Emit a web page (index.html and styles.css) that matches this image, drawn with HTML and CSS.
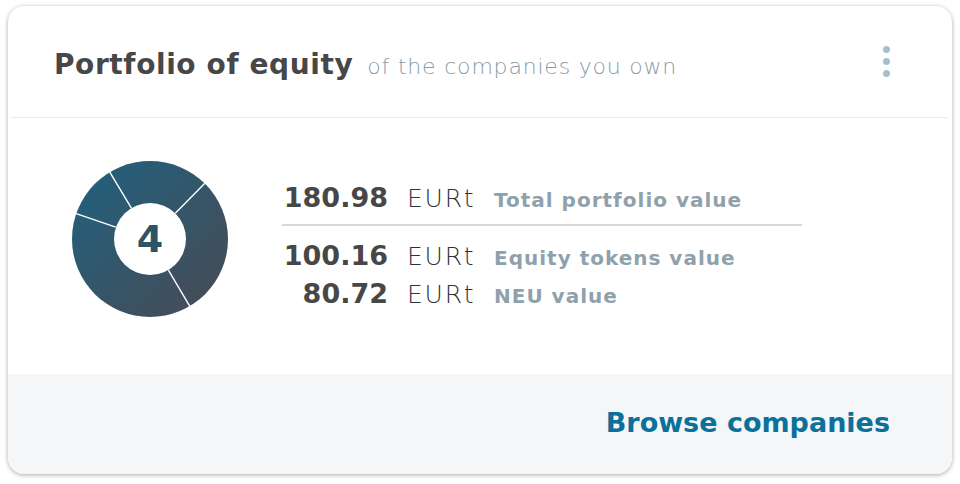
FILE: index.html
```html
<!DOCTYPE html>
<html lang="en">
<head>
<meta charset="utf-8">
<title>Portfolio of equity</title>
<link rel="stylesheet" href="styles.css">
</head>
<body>
<section class="card">
  <header class="card-header">
    <h2 class="title">Portfolio of equity</h2>
    <span class="subtitle">of the companies you own</span>
    <button class="menu" aria-label="More options"><span></span><span></span><span></span></button>
  </header>
  <div class="card-body">
    <div class="donut">
      <svg width="158" height="158" viewBox="-79 -79 158 158">
        <defs>
          <linearGradient id="g" x1="0" y1="0" x2="1" y2="1">
            <stop offset="0" stop-color="#1f6180"/>
            <stop offset="1" stop-color="#4a4a52"/>
          </linearGradient>
        </defs>
        <circle r="78" fill="url(#g)"/>
        <g stroke="#ffffff" stroke-width="1.4">
          <line x1="25.3" y1="-25.7" x2="55.6" y2="-56.5"/>
          <line x1="18.4" y1="31.2" x2="39.7" y2="67.1"/>
          <line x1="-34.3" y1="-11.8" x2="-73.8" y2="-25.4"/>
          <line x1="-18.6" y1="-30.9" x2="-40.2" y2="-66.9"/>
        </g>
        <circle r="36" fill="#ffffff"/>
      </svg>
      <span class="donut-count">4</span>
    </div>
    <div class="stats">
      <div class="row total">
        <span class="num">180.98</span><span class="unit">EURt</span><span class="label">Total portfolio value</span>
      </div>
      <div class="divider"></div>
      <div class="row">
        <span class="num">100.16</span><span class="unit">EURt</span><span class="label">Equity tokens value</span>
      </div>
      <div class="row">
        <span class="num">80.72</span><span class="unit">EURt</span><span class="label">NEU value</span>
      </div>
    </div>
  </div>
  <footer class="card-footer">
    <a class="browse" href="#">Browse companies</a>
  </footer>
</section>
</body>
</html>
```
FILE: styles.css
```css
* { box-sizing: border-box; }
html, body { margin: 0; padding: 0; background: #ffffff; }
body {
  font-family: "DejaVu Sans", "Open Sans", sans-serif;
  padding: 6px 8px 10px 8px;
}
.card {
  width: 944px;
  height: 468px;
  background: #ffffff;
  border-radius: 16px;
  box-shadow: 0 1px 4px rgba(0,0,0,0.35);
  overflow: hidden;
  display: flex;
  flex-direction: column;
}
.card-header {
  height: 112px;
  display: flex;
  align-items: baseline;
  padding: 42px 58px 0 43px;
  margin: 0 4px 0 3px;
  border-bottom: 1.5px solid #ebebeb;
}
.title {
  margin: 0;
  font-size: 28px;
  line-height: 34px;
  font-weight: 700;
  color: #474747;
  letter-spacing: 0.6px;
}
.subtitle {
  margin-left: 14px;
  font-size: 22px;
  font-weight: 200;
  color: #889ca7;
  letter-spacing: 0.8px;
  flex: 1;
}
.menu {
  align-self: flex-start;
  margin-top: -2px;
  border: 0;
  background: none;
  padding: 0;
  display: flex;
  flex-direction: column;
  gap: 5px;
}
.menu span {
  width: 7px;
  height: 7px;
  border-radius: 50%;
  background: #a4c0cc;
}
.card-body {
  flex: 1;
  display: flex;
  align-items: flex-start;
  padding: 42px 0 0 63px;
}
.donut {
  position: relative;
  width: 158px;
  height: 158px;
}
.donut svg { display: block; }
.donut-count {
  position: absolute;
  inset: 0;
  display: flex;
  align-items: center;
  justify-content: center;
  font-size: 38px;
  font-weight: 700;
  color: #2b5468;
}
.stats {
  margin: 22px 0 0 53px;
  width: 520px;
  display: flex;
  flex-direction: column;
}
.row {
  display: grid;
  grid-template-columns: 106px 106px auto;
  align-items: baseline;
  height: 38px;
}
.total { height: 42px; }
.num {
  text-align: right;
  font-size: 27px;
  font-weight: 700;
  color: #474747;
}
.unit {
  padding-left: 19px;
  font-size: 25px;
  font-weight: 200;
  letter-spacing: 1.8px;
  color: #2f3339;
}
.label {
  font-size: 20px;
  font-weight: 700;
  letter-spacing: 1px;
  color: #8fa1ab;
}
.divider {
  height: 2px;
  background: #d8d8d8;
  margin: 0 0 14px;
}
.card-footer {
  height: 100px;
  background: #f5f6f8;
  display: flex;
  align-items: center;
  justify-content: flex-end;
  padding: 0 62px 4px 0;
}
.browse {
  font-size: 27px;
  font-weight: 700;
  color: #0b709a;
  text-decoration: none;
}
```
